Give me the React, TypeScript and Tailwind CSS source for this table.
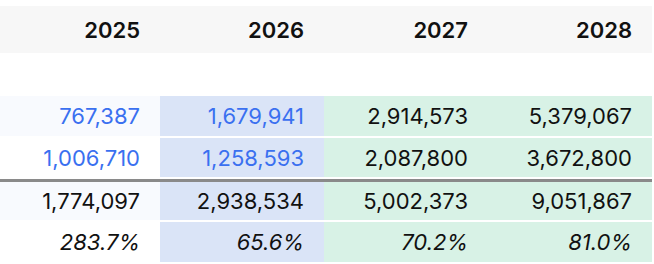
const years = ["2025", "2026", "2027", "2028"];

type Row = {
  values: string[];
  blue?: boolean;
  italic?: boolean;
  stripe?: boolean;
  h: string;
};

const rows: Row[] = [
  { values: ["767,387", "1,679,941", "2,914,573", "5,379,067"], blue: true, stripe: true, h: "h-[40px]" },
  { values: ["1,006,710", "1,258,593", "2,087,800", "3,672,800"], blue: true, h: "h-[39px]" },
  { values: ["1,774,097", "2,938,534", "5,002,373", "9,051,867"], stripe: true, h: "h-[38px]" },
  { values: ["283.7%", "65.6%", "70.2%", "81.0%"], italic: true, h: "h-[40px]" },
];

const colBg = ["", "bg-[#dae4f7]", "bg-[#d8f2e6]", "bg-[#d8f2e6]"];
const colW = ["w-[160px]", "w-[164px]", "w-[164px]", "w-[164px]"];

function DataRow({ row }: { row: Row }) {
  return (
    <div className={`flex ${row.h}`}>
      {row.values.map((v, i) => (
        <div
          key={i}
          className={`${colW[i]} flex items-center justify-end pr-[20px] ${
            i === 0 ? (row.stripe ? "bg-[#f8fafe]" : "bg-white") : colBg[i]
          } ${row.blue && i < 2 ? "text-[#3a70f0]" : "text-[#111111]"} ${row.italic ? "italic" : ""}`}
        >
          {v}
        </div>
      ))}
    </div>
  );
}

export default function App() {
  return (
    <div className="w-[654px] h-[264px] bg-white pt-[6px] font-['Inter','Liberation_Sans',sans-serif] text-[22px] leading-none">
      <div className="w-[652px]">
        <div className="flex h-[47px] bg-[#f7f7f7]">
          {years.map((y, i) => (
            <div
              key={y}
              className={`${colW[i]} flex items-center justify-end pr-[20px] font-semibold text-[#111111]`}
            >
              {y}
            </div>
          ))}
        </div>

        <div className="h-[43px]" />

        <DataRow row={rows[0]} />
        <div className="h-[2px]" />
        <DataRow row={rows[1]} />
        <div className="h-[2px]" />
        <div className="h-[3px] bg-[#8a8a8a]" />
        <DataRow row={rows[2]} />
        <div className="h-[2px]" />
        <DataRow row={rows[3]} />
      </div>
    </div>
  );
}
